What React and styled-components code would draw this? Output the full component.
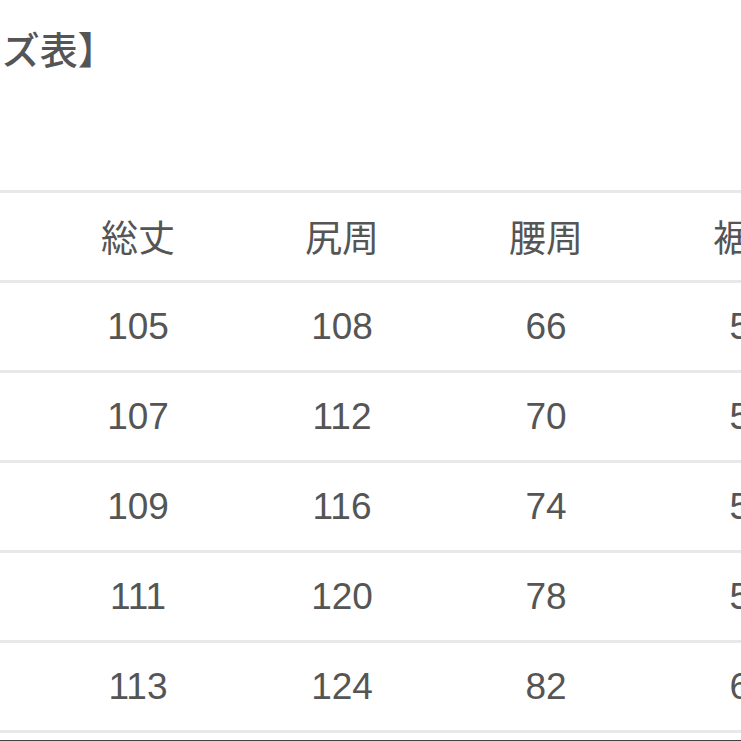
import React from "react";
import styled, { createGlobalStyle } from "styled-components";

const Global = createGlobalStyle`
  html, body { margin: 0; padding: 0; background: #fff; }
  body { overflow: hidden; }
`;

const Page = styled.div`
  width: 741px;
  height: 741px;
  overflow: hidden;
  background: #fff;
  display: flex;
  flex-direction: column;
  font-family: "Noto Sans CJK JP", "Noto Sans", sans-serif;
  color: #555;
`;

const Title = styled.h2`
  margin: 29px 0 0 -111px;
  font-size: 38px;
  line-height: 38px;
  font-weight: 500;
  color: #555;
  white-space: nowrap;
`;

const Table = styled.div`
  margin: 123px 0 0 -168px;
  width: 1020px;
  display: flex;
  flex-direction: column;
  border-bottom: 3px solid #e8e8e8;
`;

const Row = styled.div`
  display: grid;
  grid-template-columns: repeat(5, 204px);
  height: 87px;
  border-top: 3px solid #e8e8e8;
  align-items: center;
`;

const Cell = styled.div`
  text-align: center;
  font-size: 37px;
  line-height: 1;
  color: #555;
  font-family: ${(p) =>
    p.$head
      ? `"Noto Sans CJK JP", sans-serif`
      : `"Liberation Sans", Arial, sans-serif`};
  white-space: nowrap;
`;

const BottomRule = styled.div`
  margin-top: 7px;
  height: 2px;
  width: 100%;
  background: #444;
`;

const headers = ["サイズ", "総丈", "尻周", "腰周", "裾幅"];
const rows = [
  ["S", "105", "108", "66", "52"],
  ["M", "107", "112", "70", "54"],
  ["L", "109", "116", "74", "56"],
  ["XL", "111", "120", "78", "58"],
  ["XXL", "113", "124", "82", "60"],
];

export default function App() {
  return (
    <Page>
      <Global />
      <Title>【サイズ表】</Title>
      <Table>
        <Row>
          {headers.map((h) => (
            <Cell key={h} $head>
              {h}
            </Cell>
          ))}
        </Row>
        {rows.map((r) => (
          <Row key={r[0]}>
            {r.map((v, i) => (
              <Cell key={i}>{v}</Cell>
            ))}
          </Row>
        ))}
      </Table>
      <BottomRule />
    </Page>
  );
}
